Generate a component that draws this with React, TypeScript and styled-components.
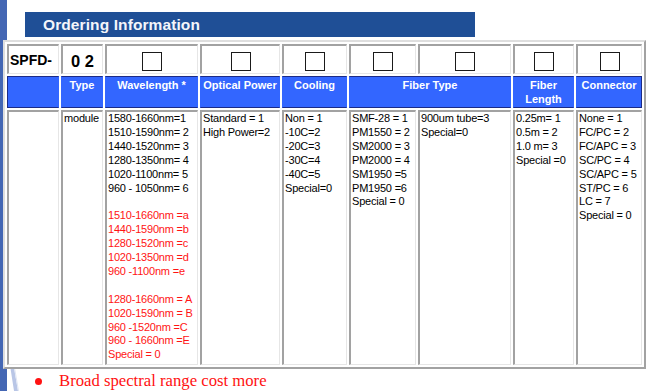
import React from "react";
import styled, { createGlobalStyle } from "styled-components";

const Global = createGlobalStyle`
  html, body { margin: 0; padding: 0; background: #fff; }
  #root { width: 649px; height: 391px; overflow: hidden; }
`;

const Page = styled.div`
  position: relative;
  width: 649px;
  height: 391px;
  overflow: hidden;
  background: linear-gradient(to right, #4467b4 0 7px, #ffffff 7px);
  padding-top: 12px;
  box-sizing: border-box;
  font-family: "Liberation Sans", Arial, sans-serif;
`;

const Decoration = styled.svg`
  position: absolute;
  left: 0;
  bottom: 0;
  pointer-events: none;
`;

const TitleBar = styled.div`
  margin-left: 25px;
  width: 450px;
  height: 25px;
  background: #1f4f96;
  color: #f4f6fb;
  font-family: "Liberation Sans", Arial, sans-serif;
  font-weight: 700;
  font-size: 15.5px;
  line-height: 25px;
  padding-left: 18px;
  box-sizing: border-box;
  letter-spacing: 0.1px;
`;

const Table = styled.table`
  position: relative;
  margin: 3px 0 0 3px;
  table-layout: fixed;
  border-collapse: separate;
  border-spacing: 2px;
  border-style: solid;
  border-width: 2px;
  border-color: #dedede #a2a2a2 #a2a2a2 #dedede;
  background: #fff;
`;

const Cell = styled.td<{ $w?: number }>`
  box-sizing: border-box;
  padding: 0;
  border-style: solid;
  border-width: 2px 1px 1px 2px;
  border-color: #a2a2a2 #e6e6e6 #e6e6e6 #a2a2a2;
  ${(p) => (p.$w ? `width: ${p.$w}px;` : "")}
`;

const CodeCell = styled(Cell)<{ $big?: boolean }>`
  height: 30px;
  vertical-align: middle;
  text-align: ${(p) => (p.$big ? "center" : "left")};
  font-family: "Liberation Sans", Arial, sans-serif;
  font-weight: 700;
  font-size: ${(p) => (p.$big ? "16.5px" : "14px")};
  padding: ${(p) => (p.$big ? "4px 0 0 0" : "0 0 0 1px")};
  color: #000;
  white-space: nowrap;
`;

const BoxCell = styled(Cell)`
  height: 30px;
  vertical-align: top;
`;

const Box = styled.div`
  width: 20px;
  height: 19px;
  box-sizing: border-box;
  border: 1px solid #1a1a1a;
  margin: 6px auto 0;
`;

const HeadCell = styled.th<{ $first?: boolean; $last?: boolean }>`
  box-sizing: border-box;
  height: 32px;
  padding: 1px 0 0;
  vertical-align: top;
  background: #3366ff;
  color: #fff;
  font-family: "Liberation Sans", Arial, sans-serif;
  font-weight: 700;
  font-size: 11px;
  line-height: 14px;
  text-align: center;
  white-space: nowrap;
  border-style: solid;
  border-width: 1px;
  border-color: #1c2b86 ${(p) => (p.$last ? "#1c2b86" : "#3366ff")} #1c2b86
    ${(p) => (p.$first ? "#1c2b86" : "#3366ff")};
`;

const DataCell = styled(Cell)`
  height: 255px;
  vertical-align: top;
  padding: 0 0 0 1px;
  font-family: "Liberation Sans", Arial, sans-serif;
  font-size: 11px;
  letter-spacing: -0.2px;
  line-height: 13.9px;
  color: #000;
  white-space: pre;
  overflow: hidden;
`;

const Line = styled.div<{ $red?: boolean }>`
  color: ${(p) => (p.$red ? "#ff1414" : "#000")};
  min-height: 13.9px;
`;

const BulletRow = styled.div`
  display: flex;
  align-items: center;
  gap: 17px;
  margin-top: 1px;
  padding-left: 35px;
  height: 22px;
  font-family: "Liberation Serif", "Times New Roman", serif;
  font-size: 16.7px;
  color: #ff1212;
`;

const Dot = styled.span`
  display: block;
  width: 7px;
  height: 7px;
  border-radius: 50%;
  background: #ff1212;
  flex: none;
`;

const widths = [52, 42, 93, 80, 65, 67, 93, 61, 66];

type L = { t: string; red?: boolean };
const b = (t: string): L => ({ t });
const r = (t: string): L => ({ t, red: true });

const dataCols: L[][] = [
  [],
  [b("module")],
  [
    b("1580-1660nm=1"),
    b("1510-1590nm= 2"),
    b("1440-1520nm= 3"),
    b("1280-1350nm= 4"),
    b("1020-1100nm= 5"),
    b("960 - 1050nm= 6"),
    b(""),
    r("1510-1660nm =a"),
    r("1440-1590nm =b"),
    r("1280-1520nm =c"),
    r("1020-1350nm =d"),
    r("960 -1100nm =e"),
    b(""),
    r("1280-1660nm = A"),
    r("1020-1590nm = B"),
    r("960 -1520nm =C"),
    r("960 - 1660nm =E"),
    r("Special = 0"),
  ],
  [b("Standard = 1"), b("High Power=2")],
  [b("Non = 1"), b("-10C=2"), b("-20C=3"), b("-30C=4"), b("-40C=5"), b("Special=0")],
  [
    b("SMF-28 = 1"),
    b("PM1550 = 2"),
    b("SM2000 = 3"),
    b("PM2000 = 4"),
    b("SM1950 =5"),
    b("PM1950 =6"),
    b("Special = 0"),
  ],
  [b("900um tube=3"), b("Special=0")],
  [b("0.25m= 1"), b("0.5m = 2"), b("1.0 m= 3"), b("Special =0")],
  [
    b("None = 1"),
    b("FC/PC = 2"),
    b("FC/APC = 3"),
    b("SC/PC = 4"),
    b("SC/APC = 5"),
    b("ST/PC = 6"),
    b("LC = 7"),
    b("Special = 0"),
  ],
];

const headers: { label: React.ReactNode; span?: number }[] = [
  { label: "" },
  { label: "Type" },
  { label: "Wavelength *" },
  { label: "Optical Power" },
  { label: "Cooling" },
  { label: "Fiber Type", span: 2 },
  {
    label: (
      <>
        Fiber
        <br />
        Length
      </>
    ),
  },
  { label: "Connector" },
];

export default function App() {
  return (
    <Page>
      <Global />
      <Decoration width="24" height="70" viewBox="0 0 24 70">
        <polygon points="5,12 8,12 18,70 14,70" fill="#b9c6e6" />
        <polygon points="8,12 9,12 19,70 18,70" fill="#dfe5f3" />
      </Decoration>
      <TitleBar>Ordering Information</TitleBar>
      <Table>
        <colgroup>
          {widths.map((w, i) => (
            <col key={i} style={{ width: w }} />
          ))}
        </colgroup>
        <tbody>
          <tr>
            <CodeCell $w={52}>SPFD-</CodeCell>
            <CodeCell $w={42} $big>
              0 2
            </CodeCell>
            {widths.slice(2).map((w, i) => (
              <BoxCell key={i} $w={w}>
                <Box />
              </BoxCell>
            ))}
          </tr>
          <tr>
            {headers.map((h, i) => (
              <HeadCell
                key={i}
                colSpan={h.span}
                $first={i === 0}
                $last={i === headers.length - 1}
              >
                {h.label}
              </HeadCell>
            ))}
          </tr>
          <tr>
            {dataCols.map((lines, i) => (
              <DataCell key={i} $w={widths[i]}>
                {lines.map((l, j) => (
                  <Line key={j} $red={l.red}>
                    {l.t}
                  </Line>
                ))}
              </DataCell>
            ))}
          </tr>
        </tbody>
      </Table>
      <BulletRow>
        <Dot />
        <span>Broad spectral range cost more</span>
      </BulletRow>
    </Page>
  );
}
